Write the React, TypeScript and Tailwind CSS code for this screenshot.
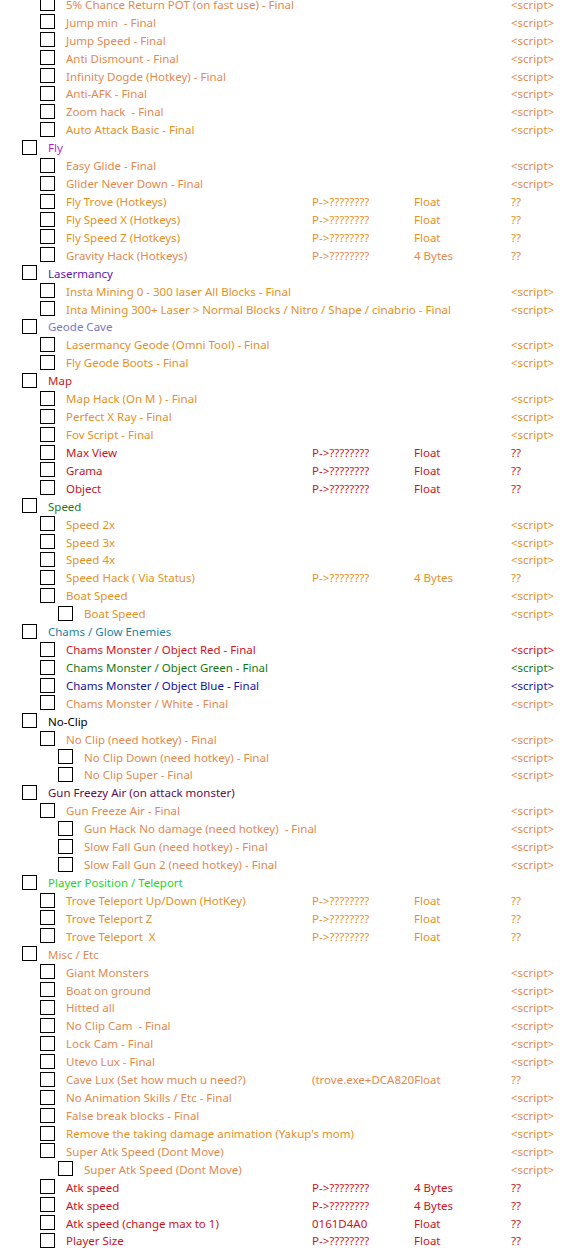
const SAL = "#e3894f";
const AMB = "#e6901f";
const RED = "#c8141e";

type Row = {
    lvl: number;
    text: string;
    color: string;
    addr?: string;
    type?: string;
    value?: string;
};

const S = "<script>";
const P = "P->????????";

const rows: Row[] = [
    { lvl: 1, text: "5% Chance Return POT (on fast use) - Final", color: SAL, value: S },
    { lvl: 1, text: "Jump min  - Final", color: SAL, value: S },
    { lvl: 1, text: "Jump Speed - Final", color: SAL, value: S },
    { lvl: 1, text: "Anti Dismount - Final", color: SAL, value: S },
    { lvl: 1, text: "Infinity Dogde (Hotkey) - Final", color: SAL, value: S },
    { lvl: 1, text: "Anti-AFK - Final", color: SAL, value: S },
    { lvl: 1, text: "Zoom hack  - Final", color: SAL, value: S },
    { lvl: 1, text: "Auto Attack Basic - Final", color: AMB, value: S },
    { lvl: 0, text: "Fly", color: "#b41ed2" },
    { lvl: 1, text: "Easy Glide - Final", color: SAL, value: S },
    { lvl: 1, text: "Glider Never Down - Final", color: SAL, value: S },
    { lvl: 1, text: "Fly Trove (Hotkeys)", color: AMB, addr: P, type: "Float", value: "??" },
    { lvl: 1, text: "Fly Speed X (Hotkeys)", color: AMB, addr: P, type: "Float", value: "??" },
    { lvl: 1, text: "Fly Speed Z (Hotkeys)", color: AMB, addr: P, type: "Float", value: "??" },
    { lvl: 1, text: "Gravity Hack (Hotkeys)", color: SAL, addr: P, type: "4 Bytes", value: "??" },
    { lvl: 0, text: "Lasermancy", color: "#6414b4" },
    { lvl: 1, text: "Insta Mining 0 - 300 laser All Blocks - Final", color: AMB, value: S },
    { lvl: 1, text: "Inta Mining 300+ Laser > Normal Blocks / Nitro / Shape / cinabrio - Final", color: AMB, value: S },
    { lvl: 0, text: "Geode Cave", color: "#7878c8" },
    { lvl: 1, text: "Lasermancy Geode (Omni Tool) - Final", color: AMB, value: S },
    { lvl: 1, text: "Fly Geode Boots - Final", color: AMB, value: S },
    { lvl: 0, text: "Map", color: "#c41a1a" },
    { lvl: 1, text: "Map Hack (On M ) - Final", color: AMB, value: S },
    { lvl: 1, text: "Perfect X Ray - Final", color: AMB, value: S },
    { lvl: 1, text: "Fov Script - Final", color: AMB, value: S },
    { lvl: 1, text: "Max View", color: RED, addr: P, type: "Float", value: "??" },
    { lvl: 1, text: "Grama", color: RED, addr: P, type: "Float", value: "??" },
    { lvl: 1, text: "Object", color: RED, addr: P, type: "Float", value: "??" },
    { lvl: 0, text: "Speed", color: "#1e781e" },
    { lvl: 1, text: "Speed 2x", color: AMB, value: S },
    { lvl: 1, text: "Speed 3x", color: AMB, value: S },
    { lvl: 1, text: "Speed 4x", color: AMB, value: S },
    { lvl: 1, text: "Speed Hack ( Via Status)", color: AMB, addr: P, type: "4 Bytes", value: "??" },
    { lvl: 1, text: "Boat Speed", color: AMB, value: S },
    { lvl: 2, text: "Boat Speed", color: AMB, value: S },
    { lvl: 0, text: "Chams / Glow Enemies", color: "#2382a0" },
    { lvl: 1, text: "Chams Monster / Object Red - Final", color: "#d2141e", value: S },
    { lvl: 1, text: "Chams Monster / Object Green - Final", color: "#147814", value: S },
    { lvl: 1, text: "Chams Monster / Object Blue - Final", color: "#1414a0", value: S },
    { lvl: 1, text: "Chams Monster / White - Final", color: SAL, value: S },
    { lvl: 0, text: "No-Clip", color: "#000000" },
    { lvl: 1, text: "No Clip (need hotkey) - Final", color: SAL, value: S },
    { lvl: 2, text: "No Clip Down (need hotkey) - Final", color: SAL, value: S },
    { lvl: 2, text: "No Clip Super - Final", color: SAL, value: S },
    { lvl: 0, text: "Gun Freezy Air (on attack monster)", color: "#640a50" },
    { lvl: 1, text: "Gun Freeze Air - Final", color: SAL, value: S },
    { lvl: 2, text: "Gun Hack No damage (need hotkey)  - Final", color: SAL, value: S },
    { lvl: 2, text: "Slow Fall Gun (need hotkey) - Final", color: SAL, value: S },
    { lvl: 2, text: "Slow Fall Gun 2 (need hotkey) - Final", color: SAL, value: S },
    { lvl: 0, text: "Player Position / Teleport", color: "#28d228" },
    { lvl: 1, text: "Trove Teleport Up/Down (HotKey)", color: AMB, addr: P, type: "Float", value: "??" },
    { lvl: 1, text: "Trove Teleport Z", color: AMB, addr: P, type: "Float", value: "??" },
    { lvl: 1, text: "Trove Teleport  X", color: AMB, addr: P, type: "Float", value: "??" },
    { lvl: 0, text: "Misc / Etc", color: SAL },
    { lvl: 1, text: "Giant Monsters", color: SAL, value: S },
    { lvl: 1, text: "Boat on ground", color: SAL, value: S },
    { lvl: 1, text: "Hitted all", color: SAL, value: S },
    { lvl: 1, text: "No Clip Cam  - Final", color: SAL, value: S },
    { lvl: 1, text: "Lock Cam - Final", color: SAL, value: S },
    { lvl: 1, text: "Utevo Lux - Final", color: SAL, value: S },
    { lvl: 1, text: "Cave Lux (Set how much u need?)", color: SAL, addr: "(trove.exe+DCA820Float", value: "??" },
    { lvl: 1, text: "No Animation Skills / Etc - Final", color: SAL, value: S },
    { lvl: 1, text: "False break blocks - Final", color: SAL, value: S },
    { lvl: 1, text: "Remove the taking damage animation (Yakup's mom)", color: AMB, value: S },
    { lvl: 1, text: "Super Atk Speed (Dont Move)", color: SAL, value: S },
    { lvl: 2, text: "Super Atk Speed (Dont Move)", color: SAL, value: S },
    { lvl: 1, text: "Atk speed", color: RED, addr: P, type: "4 Bytes", value: "??" },
    { lvl: 1, text: "Atk speed", color: RED, addr: P, type: "4 Bytes", value: "??" },
    { lvl: 1, text: "Atk speed (change max to 1)", color: RED, addr: "0161D4A0", type: "Float", value: "??" },
    { lvl: 1, text: "Player Size", color: RED, addr: P, type: "Float", value: "??" },
];

const indent = ["pl-[22px]", "pl-[40px]", "pl-[58px]"];

export default function App() {
    return (
        <div className="w-[563px] h-[1255px] overflow-hidden bg-white font-['Noto_Sans',sans-serif] text-[11.5px]">
            <div className="-mt-[5px]">
                {rows.map((r, i) => (
                    <div key={i} className="flex items-center h-[17.93px] whitespace-pre" style={{ color: r.color }}>
                        <div className={["flex items-center w-[312px] shrink-0", indent[r.lvl]].join(" ")}>
                            <span className="w-[15px] h-[15px] border border-black bg-white shrink-0" />
                            <span className="ml-[11px] pt-[1px]">{r.text}</span>
                        </div>
                        <div className="w-[102px] shrink-0 pt-[1px]">{r.addr}</div>
                        <div className="w-[97px] shrink-0 pt-[1px]">{r.type}</div>
                        <div className="pt-[1px]">{r.value}</div>
                    </div>
                ))}
            </div>
        </div>
    );
}
